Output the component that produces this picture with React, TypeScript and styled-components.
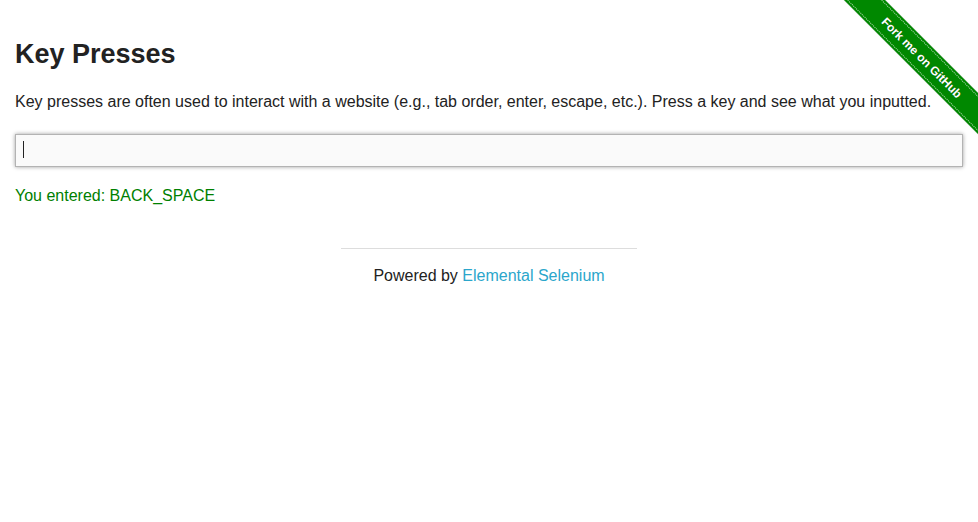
import React from "react";
import styled, { createGlobalStyle } from "styled-components";

const GlobalStyle = createGlobalStyle`
  html, body {
    margin: 0;
    padding: 0;
    background: #ffffff;
  }
  body {
    font-family: "Liberation Sans", Arial, Helvetica, sans-serif;
    color: #222222;
    font-size: 16px;
  }
  * { box-sizing: border-box; }
`;

const Page = styled.div`
  position: relative;
  width: 100%;
  min-height: 522px;
`;

const Content = styled.main`
  padding: 35px 15px 0;
  display: flex;
  flex-direction: column;
`;

const Title = styled.h3`
  margin: 0;
  font-size: 27px;
  line-height: 38px;
  font-weight: bold;
  color: #222222;
`;

const Text = styled.p<{ $color?: string; $top: number }>`
  margin: ${(p) => p.$top}px 0 0;
  font-size: 16px;
  line-height: 26px;
  color: ${(p) => p.$color ?? "#222222"};
`;

const Field = styled.div`
  position: relative;
  margin-top: 19px;
  height: 33px;
`;

const KeyInput = styled.input`
  display: block;
  width: 100%;
  height: 33px;
  margin: 0;
  padding: 8px;
  font-family: inherit;
  font-size: 14px;
  color: rgba(0, 0, 0, 0.75);
  background: #fafafa;
  border: 1px solid #b3b3b3;
  box-shadow: 0 0 4px #a0a0a0;
  outline: none;
  caret-color: transparent;
`;

const Caret = styled.span`
  position: absolute;
  left: 8px;
  top: 7px;
  width: 1px;
  height: 17px;
  background: #222222;
`;

const Footer = styled.footer`
  width: 326px;
  margin: 39px auto 0;
  padding: 0 15px;
  display: flex;
  flex-direction: column;
  align-items: stretch;
`;

const Rule = styled.hr`
  margin: 0;
  border: 0;
  border-top: 1px solid #dddddd;
  height: 0;
`;

const FooterText = styled.div`
  margin-top: 14px;
  text-align: center;
  font-size: 16px;
  line-height: 26px;
  color: #222222;
`;

const FooterLink = styled.a`
  color: #2ba6cb;
  text-decoration: none;
`;

const RibbonCorner = styled.a`
  position: absolute;
  top: 0;
  right: 0;
  width: 149px;
  height: 149px;
  overflow: hidden;
  text-decoration: none;
`;

const Ribbon = styled.div`
  position: absolute;
  left: -17px;
  top: 43px;
  width: 220px;
  height: 29px;
  padding: 2px 0;
  background: #008800;
  transform: rotate(45deg);
  box-shadow: 0 0 1px rgba(0, 0, 0, 0.3);
`;

const RibbonLabel = styled.div`
  height: 25px;
  border-top: 1px dotted rgba(255, 255, 255, 0.7);
  border-bottom: 1px dotted rgba(255, 255, 255, 0.7);
  display: flex;
  align-items: center;
  justify-content: center;
  font-family: "Liberation Sans", Arial, sans-serif;
  font-weight: bold;
  font-size: 12px;
  color: #ffffff;
  text-shadow: 0 0 1px rgba(0, 0, 0, 0.4);
  white-space: nowrap;
`;

export default function App() {
  return (
    <Page>
      <GlobalStyle />
      <Content>
        <Title>Key Presses</Title>
        <Text $top={16}>
          Key presses are often used to interact with a website (e.g., tab order, enter, escape, etc.). Press a key and see what you inputted.
        </Text>
        <Field>
          <KeyInput id="target" type="text" defaultValue="" />
          <Caret />
        </Field>
        <Text $top={16} $color="#008000">
          You entered: BACK_SPACE
        </Text>
      </Content>
      <Footer>
        <Rule />
        <FooterText>
          Powered by <FooterLink href="#">Elemental Selenium</FooterLink>
        </FooterText>
      </Footer>
      <RibbonCorner href="#">
        <Ribbon>
          <RibbonLabel>Fork me on GitHub</RibbonLabel>
        </Ribbon>
      </RibbonCorner>
    </Page>
  );
}
